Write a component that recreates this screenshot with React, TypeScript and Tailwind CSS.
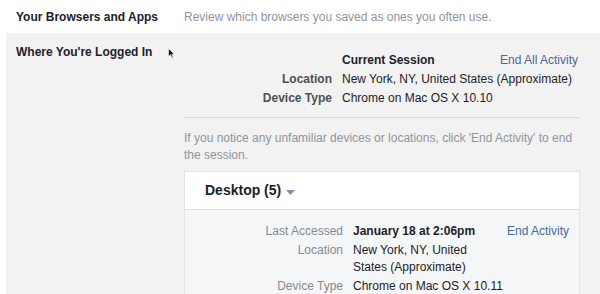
import React from "react";

const font = { fontFamily: '"Liberation Sans", Arial, sans-serif' };

type Row = { label: string; value: React.ReactNode };

const CURRENT: Row[] = [
  { label: "Location", value: "New York, NY, United States (Approximate)" },
  { label: "Device Type", value: "Chrome on Mac OS X 10.10" },
];

function Cursor() {
  return (
    <svg
      className="absolute left-[168px] top-[48px]"
      width="7"
      height="11"
      viewBox="0 0 7 11"
    >
      <path d="M0.5 0.5 L0.5 8.5 L2.5 6.8 L4 10 L5.2 9.4 L3.8 6.3 L6.3 6.3 Z" fill="#111" stroke="#fff" strokeWidth="0.6" />
    </svg>
  );
}

export default function App() {
  return (
    <div className="relative w-[600px] h-[294px] overflow-hidden bg-white text-[12px] text-[#1d2129]" style={font}>
      {/* Browsers row */}
      <div className="flex items-center h-[33px]">
        <div className="w-[184px] pl-4 font-bold">Your Browsers and Apps</div>
        <div className="text-[#90949c]">Review which browsers you saved as ones you often use.</div>
      </div>

      {/* Logged in section */}
      <div className="ml-[6px] bg-[#f2f2f2] flex h-[261px]">
        <div className="w-[178px] pl-[10px] pt-[11px] font-bold leading-[16px]">Where You&apos;re Logged In</div>

        <div className="w-[396px] pt-[19px]">
          <div className="flex flex-col gap-[2px] leading-[17px]">
            <div className="flex">
              <div className="w-[148px]" />
              <div className="ml-[10px] font-bold">Current Session</div>
              <div className="ml-auto mr-[2px] text-[#4b67a1]">End All Activity</div>
            </div>
            {CURRENT.map((r) => (
              <div key={r.label} className="flex">
                <div className="w-[148px] text-right font-bold text-[#4b4f56]">{r.label}</div>
                <div className="ml-[10px]">{r.value}</div>
              </div>
            ))}
          </div>

          <div className="mt-[10px] h-px bg-[#d9dadc]" />

          <p className="mt-[12px] leading-[17px] text-[#90949c]">
            If you notice any unfamiliar devices or locations, click &apos;End Activity&apos; to end the session.
          </p>

          {/* Desktop card */}
          <div className="mt-[7px] border border-[#e3e4e6] bg-white">
            <div className="flex items-center h-[38px] pl-[20px] border-b border-[#dddfe2]">
              <span className="text-[14px] font-bold">Desktop (5)</span>
              <svg className="ml-[5px] mt-[3px]" width="9" height="5" viewBox="0 0 9 5">
                <path d="M0 0 L9 0 L4.5 5 Z" fill="#7f8fb5" />
              </svg>
            </div>
            <div className="bg-[#f5f6f7] pt-[13px] pb-4 flex flex-col gap-[2px] leading-[17px]">
              <div className="flex">
                <div className="w-[158px] text-right text-[#868a91]">Last Accessed</div>
                <div className="ml-[10px] w-[150px] font-bold">January 18 at 2:06pm</div>
                <div className="ml-[4px] text-[#4b67a1]">End Activity</div>
              </div>
              <div className="flex">
                <div className="w-[158px] text-right text-[#868a91]">Location</div>
                <div className="ml-[10px] w-[150px]">New York, NY, United States (Approximate)</div>
              </div>
              <div className="flex">
                <div className="w-[158px] text-right text-[#868a91]">Device Type</div>
                <div className="ml-[10px] w-[150px]">Chrome on Mac OS X 10.11</div>
              </div>
            </div>
          </div>
        </div>
      </div>

      <Cursor />
    </div>
  );
}
